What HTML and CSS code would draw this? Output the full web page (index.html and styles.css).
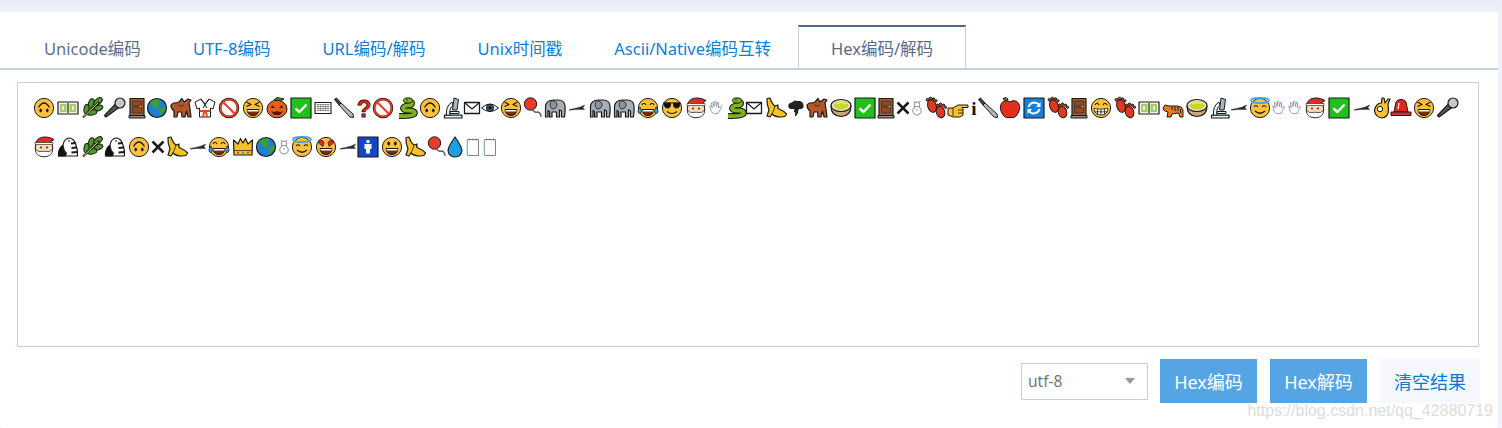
FILE: index.html
```html
<!DOCTYPE html>
<html lang="zh-CN">
<head>
    <meta charset="UTF-8">
    <title>Hex编码/解码</title>
    <link rel="stylesheet" href="styles.css">
</head>
<body>
    <svg class="defs" width="0" height="0">
        <defs>
            <circle id="ball" cy="12" r="9.6" fill="#fdc13c"/>
            <g id="mouth"><path d="M-6 13.5H6Q5.5 19.5 0 19.5T-6 13.5Z" fill="#7c2a12"/><path d="M-5.500 14H5.500V15.500H-5.500Z" fill="#fff" stroke="none"/></g>
            <g id="face"><use href="#ball"/><path d="M-5.500 11.500Q0 2.500 5.500 11.500" stroke-width="1.300"/><ellipse cx="-3.300" cy="14.500" rx=".9" ry="1.400" fill="#222"/><ellipse cx="3.300" cy="14.500" rx=".9" ry="1.400" fill="#222"/></g>
            <g id="laugh"><use href="#ball"/><path d="M-6.500 6L-2 8.500L-6.500 10.500M6.500 6L2 8.500L6.500 10.500" stroke-width="1.300"/><use href="#mouth"/></g>
            <g id="smile"><use href="#ball"/><ellipse cx="-3.300" cy="8.500" rx="1" ry="1.600" fill="#222"/><ellipse cx="3.300" cy="8.500" rx="1" ry="1.600" fill="#222"/><use href="#mouth"/></g>
            <g id="grin"><use href="#ball"/><path d="M-6 9Q-4 5.500 -2 9M2 9Q4 5.500 6 9" stroke-width="1.200"/><path d="M-7 12.500Q0 14 7 12.500Q6.500 19 0 19T-7 12.500ZM-3.500 13V18.500M0 13.500V19M3.500 13V18.500M-6.500 15.800H6.500" fill="#fff" stroke-width=".8"/></g>
            <g id="joy"><use href="#ball"/><path d="M-6 9Q-4 5.500 -2 9M2 9Q4 5.500 6 9" stroke-width="1.200"/><use href="#mouth"/><path d="M-8 11Q-11.500 15 -9.500 17T-6.500 15ZM8 11Q11.500 15 9.500 17T6.500 15Z" fill="#39a5e8" stroke-width=".7"/></g>
            <g id="sun"><use href="#ball"/><path d="M-9 7H9M-8 7H-1.500Q-1 12 -4.500 12T-8 7ZM1.500 7H8Q8 12 4.500 12T1.500 7Z" fill="#111"/><path d="M-5 15.500Q0 19.500 5 15.500" stroke-width="1.200"/></g>
            <g id="halo"><use href="#ball"/><ellipse cy="4.500" rx="9" ry="2.600" fill="none" stroke="#39a5e8" stroke-width="1.600"/><path d="M-6 11Q-4 8.500 -2 11M2 11Q4 8.500 6 11M-5 15Q0 19.500 5 15" stroke-width="1.200"/></g>
            <g id="hearteyes"><use href="#ball"/><path d="M-3 11.500L-7.500 8Q-8 5 -5.500 5.500Q-3.500 4.500 -2 7.500ZM3 11.500L7.500 8Q8 5 5.500 5.500Q3.500 4.500 2 7.500Z" fill="#e8261c" stroke-width=".7"/><use href="#mouth"/></g>
            <g id="santa"><circle cy="13" r="8.800" fill="#fbd9b5"/><path d="M-8.500 14Q-9 21.500 0 21.700Q9 21.500 8.500 14Q6 17.500 3 16.500Q0 16 -3 16.500Q-6 17.500 -8.500 14Z" fill="#fff" stroke-width=".7"/><path d="M-8.500 8Q-6 1.500 2 2Q7 2.500 10 4.500L7 6.500L8.500 8.500H-8.500Z" fill="#e02c20"/><path d="M-9 7.500H9V9.500H-9Z" fill="#fff" stroke-width=".6"/><circle cx="-3" cy="12.500" r=".9" fill="#222" stroke="none"/><circle cx="3" cy="12.500" r=".9" fill="#222" stroke="none"/></g>
            <g id="money"><rect x="-10" y="6" width="20" height="12" fill="#f4f4df" stroke-width="1.200"/><rect x="-8" y="8" width="6.500" height="8" fill="#a9c779" stroke="none"/><rect x="1.500" y="8" width="6.500" height="8" fill="#a9c779" stroke="none"/><rect x="-1" y="7" width="2" height="10" fill="#5f8b3a" stroke="none"/><path d="M-5 10V14M5 10V14" stroke="#fff" stroke-width="1.500"/></g>
            <g id="leaf"><g fill="#4d9a2a"><ellipse cx="6" cy="5.500" rx="5" ry="2.800" transform="rotate(-40 6 5.500)"/><ellipse cx="-1" cy="7.500" rx="5" ry="2.600" transform="rotate(-70 -1 7.500)"/><ellipse cx="6.500" cy="12" rx="4.500" ry="2.600" transform="rotate(-20 6.500 12)"/><ellipse cx="-5.500" cy="13" rx="4.500" ry="2.500" transform="rotate(-80 -5.500 13)"/><ellipse cx="0" cy="16.500" rx="5" ry="2.500" transform="rotate(-10 0 16.500)"/></g><path d="M-9 21.500L7 6" stroke="#1b1b1b" stroke-width="2"/><path d="M-8.500 21L6 7" stroke="#dde65a" stroke-width="1"/></g>
            <g id="mic"><path d="M-9 21L-10.500 19.500L.5 8L4 11.500Z" fill="#5a5a5a" stroke-width="1.200"/><circle cx="5" cy="7" r="5" fill="#c4c7cc" stroke-width="1.200"/></g>
            <g id="door"><rect x="-7" y="2.500" width="14" height="17" fill="#a05d33" stroke-width="1.200"/><rect x="-4.500" y="5" width="9" height="5" fill="#8a4b25" stroke-width=".5"/><rect x="-4.500" y="11" width="9" height="6" fill="#8a4b25" stroke-width=".5"/><circle cx="3.500" cy="10.500" r=".8" fill="#f4d05b" stroke="none"/><rect x="-8" y="19.500" width="16" height="2.500" fill="#8d8d8d"/></g>
            <g id="earth"><circle cy="12" r="9.500" fill="#1f7fd2" stroke-width="1.200"/><path d="M-7 6Q-2 2 3 4L1 7L3 10L-1 13L-4 10ZM2 14L7 10L9 13L4 19Z" fill="#3aa02f" stroke="none"/></g>
            <g id="ox"><path d="M-10 9Q-8 6 -5 7L-2 6L1 2.500L3 6L7 3L10 4L8 7L9 13L10 21H7L5.500 15L4 21H1L.5 16H-3L-4 21H-7L-7 15Q-10 13 -10 9Z" fill="#b5562a" stroke-width="1.200"/><path d="M-3 9Q0 11 3 9" stroke-width=".7"/></g>
            <g id="gi"><path d="M-4 3L-10 6L-8 13L-5.500 12V21H5.500V12L8 13L10 6L4 3L0 8Z" fill="#fff"/><path d="M-5.500 14H5.500V16H-5.500ZM-2 16L-3 21H-1L0 16L1 21H3L2 16Z" fill="#e0442c" stroke="none"/><path d="M-4 3L2 12M4 3L-2 12"/></g>
            <g id="no"><circle cy="12" r="9" fill="#fff" stroke="#1b1b1b" stroke-width="2.500"/><circle cy="12" r="8.500" fill="none" stroke="#e23e28" stroke-width="2"/><path d="M-6 6L6 18" stroke="#e23e28" stroke-width="2"/></g>
            <g id="pumpkin"><path d="M-3 4L0 1.500L7 3L3 5Z" fill="#3a9a2e"/><ellipse cy="13" rx="10" ry="8.800" fill="#e8601c"/><path d="M-5 9L-2 12H-6ZM5 9L2 12H6ZM-6 15L-3 16L0 15L3 16L6 15L3 19H-3Z" fill="#4b1905" stroke="none"/></g>
            <g id="check"><rect x="-10" y="2" width="20" height="20" fill="#1fc21a" stroke-width="1.200"/><path d="M-5.500 12.500L-1.500 16L5.500 8.500" stroke="#fff" stroke-width="2.400"/></g>
            <g id="keyboard"><rect x="-8" y="6.500" width="16" height="11" fill="#fff" stroke-width="1.100"/><path d="M-6.500 8.500H6.500M-6.500 10.500H6.500M-6.500 12.500H6.500M-6.500 14.500H6.500M-5 8V15M-2.500 8V15M0 8V15M2.500 8V15M5 8V15" stroke="#777" stroke-width=".7"/></g>
            <g id="knife"><path d="M-9.500 3.500L-7.500 2L-3 7L-5 9Z" fill="#5e3a22"/><path d="M-5 9L-3 7L9 18L9.500 21.500L6 21Z" fill="#b8b8b8"/></g>
            <text id="question" y="21" text-anchor="middle" class="glyph-q">?</text>
            <text id="info" y="19" text-anchor="middle" class="glyph-i">i</text>
            <g id="snake"><path d="M1 5Q7 6 4 9Q-4 9.500 -4 12.500Q-3 15 3 14.500Q9 15 7.500 18Q5 20.500 -8 20" stroke-width="6"/><path d="M1 5Q7 6 4 9Q-4 9.500 -4 12.500Q-3 15 3 14.500Q9 15 7.500 18Q5 20.500 -8 20" stroke="#7fb321" stroke-width="3.800"/><ellipse cx="1" cy="4.500" rx="4.500" ry="2.600" fill="#7fb321"/><circle cx="0" cy="4" r=".7" fill="#111" stroke="none"/></g>
            <g id="micro"><path d="M-8.500 22V19.200H9V22Z" fill="#dff3fb" stroke-width="1.200"/><path d="M-6.500 19.200Q-7.500 10 -1 6L0 9.500Q-4 12 -3 19.200Z" fill="#dff3fb"/><path d="M1 2L5.500 3.500L4 14H-.5Z" fill="#aab6bf"/><path d="M-3 15.500H6V17.500H-3Z" fill="#dff3fb"/></g>
            <g id="mail"><rect x="-7.500" y="6.500" width="15" height="11" fill="#fff" stroke-width="1.300"/><path d="M-7 7L0 13L7 7" stroke-width="1.100"/></g>
            <g id="eye"><path d="M-8.500 12Q0 4 8.500 12Q0 19 -8.500 12Z" fill="#fff"/><circle cy="11.800" r="3.600" fill="#38586f"/><circle cy="11.800" r="1.500" fill="#111" stroke="none"/></g>
            <g id="balloon"><circle cx="-2.500" cy="8" r="6.200" fill="#e83a28"/><path d="M-.5 13.500Q1 17 5 16Q8 17 8 21" stroke-width="1.400" stroke="#5a6670"/></g>
            <g id="elephant"><path d="M-9.500 21V11Q-9.500 4 -1 4H3Q9.500 4 10 10Q10.500 15 9.500 21H6.500V15L4.500 14V21H1.500V16H-3V21H-5.500V15.500L-7 14.500V21Z" fill="#a5adb5" stroke-width="1.200"/><path d="M-3 4.500Q-7 8 -3 13Q2 13 2 8Q1 5 -3 4.500Z" fill="#8d959e" stroke-width=".8"/></g>
            <g id="plane" transform="scale(.85 1)"><path d="M-9 13.500Q-3 12.500 3 11.300L9 9L7 11.800L9 13.500H-1L-9 14.200Z" fill="#2b2b2b" stroke-width=".4"/></g>
            <g id="hand" transform="translate(0 3) scale(.75)"><path d="M-3 20Q-7 18 -8 11Q-9 9 -7 9L-5 12L-6 5Q-5 3.500 -4 5L-2.500 10L-2 3.500Q-1 2.500 0 3.500L.5 10L2 4.500Q3.500 4 3.500 5.500L3 12L6 9.500Q8 10 7 11.500L3 19Z" fill="#fff" stroke="#7f8a99" stroke-width="1.100"/></g>
            <g id="banana"><path d="M-9 2.500L-6 2Q-4 8 -1 10L2 9Q1 12 3 13Q8 15 10.500 18Q10 21 5 21Q-1 21 -4 18L-6 21L-9 20L-7 14Q-9.500 8 -9 2.500Z" fill="#f8c31f" stroke-width="1.200"/><path d="M-1 10Q-2 14 -4 18" stroke-width=".8"/></g>
            <g id="cloud"><path d="M-7 11Q-8 7 -4 7Q-2 4 2 5.500Q7 5 7 9.500Q8 12 5 12.500H-5Q-7 12.500 -7 11ZM-1 12.500H3L1 16L2 16L-.5 20L0 16H-1.500Z" fill="#222"/></g>
            <g id="bowl"><path d="M-10 10Q-10 20 0 20.500Q10 20 10 10Z" fill="#c9a77b" stroke-width="1.200"/><ellipse cy="9.500" rx="10" ry="6" fill="#e9e2c4" stroke-width="1.200"/><ellipse cy="9.500" rx="7.500" ry="4" fill="#c8d62a" stroke="none"/><path d="M-5 8Q0 5 5 8" stroke="#eef39a"/></g>
            <g id="cross"><path d="M-5.500 6.500L5.500 17.500M5.500 6.500L-5.500 17.500" stroke-width="2.500"/></g>
            <g id="snowman" transform="translate(0 2) scale(.85)"><circle cy="8" r="3.300" fill="#fff" stroke="#667" stroke-width=".9"/><circle cy="15" r="5" fill="#fff" stroke="#667" stroke-width=".9"/><path d="M-4 4L-2 5M4 4L2 5" stroke="#c33" stroke-width=".8"/><circle cy="14" r=".7" fill="#333" stroke="none"/></g>
            <g id="feet" fill="#e2381f"><ellipse cx="-4" cy="10" rx="4.200" ry="6.500" transform="rotate(-18 -4 10)"/><circle cx="-8.500" cy="3.800" r="1.400"/><circle cx="-5.500" cy="2.500" r="1.300"/><circle cx="-2.500" cy="3" r="1.200"/><circle cx="0" cy="4.800" r="1.100"/><ellipse cx="4.500" cy="16" rx="4.200" ry="5.800" transform="rotate(-18 4.500 16)"/><circle cx="1.500" cy="9.300" r="1.300"/><circle cx="4.500" cy="8.300" r="1.300"/><circle cx="7.500" cy="9.300" r="1.200"/><circle cx="9.500" cy="11.300" r="1.100"/></g>
            <g id="point"><path d="M-10 12H-5L0 9H10V11.500H4L5 13V19L2 21H-5L-10 19Z" fill="#fbc12e"/><path d="M-5 12V20M0 14H5M0 17H5" stroke-width=".8"/></g>
            <g id="apple"><path d="M-2 3L-5 1.500L-7 3L-3 5.500Z" fill="#3a9a2e"/><path d="M0 6Q-3 3.500 -7 5.500Q-11 9 -9 15Q-6 23 -1 21.500H1Q6 23 9 15Q11 9 7 5.500Q3 3.500 0 6Z" fill="#e2301e"/></g>
            <g id="recycle"><rect x="-10" y="2" width="20" height="20" fill="#1581dc" stroke-width="1.200"/><path d="M-5.500 11Q-4 6.500 1 6.500Q4 7 5.500 9.500M5.500 13Q4 17.500 -1 17.500Q-4 17 -5.500 14.500" stroke="#fff" stroke-width="2"/><path d="M6.500 6V11H2ZM-6.500 18V13H-2Z" fill="#fff" stroke="none"/></g>
            <g id="tiger"><path d="M-10 12L-8 9L-4 10L4 10Q9 10 10 14L10 21H7L5.500 17L-1 18L-2 21H-6L-5 16L-9 14.500Z" fill="#ec7a1c"/><path d="M-1 10.500V14M2 10.500V15M5 11V15M7.500 13V17" stroke-width="1"/></g>
            <g id="ok"><path d="M-4 8Q-7.500 11 -7.500 15Q-6.500 21 0 22Q6.500 21 6.500 14L6 8L8 3H6L3 7L2 2H0L-.5 7Q-2 7 -4 8Z" fill="#fbc12e" stroke-width="1.200"/><circle cx="-2" cy="13" r="2.700" fill="#fff"/></g>
            <g id="siren"><path d="M-7 16L-5 6Q-4 3.500 0 3.500T5 6L7 16Z" fill="#e8261c"/><rect x="-10" y="16" width="20" height="3.500" fill="#c2343a"/><path d="M-3 13L-2 7" stroke="#fff" stroke-width="1.200"/></g>
            <g id="zebra"><path d="M-9.500 21Q-10 14 -5 10Q-4 4 1 3Q6 3 8 10Q10 15 9.500 21H-8Z" fill="#fff" stroke-width="1.200"/><path d="M-9.500 21Q-10 14 -5 10Q-4.500 16 -1.500 18L-2.500 21Z" fill="#111"/><path d="M3 8.500L7.500 8M3.500 13L9 12.500M3.500 17.500L9.500 17" stroke-width="1.800"/><circle cx="1" cy="6" r="1" fill="#e2381f" stroke="none"/></g>
            <g id="crown"><path d="M-9.500 5L-5 9L-2.500 3.500L0 8L2.500 3.500L5 9L9.500 5L9 20H-9Z" fill="#f6c22c" stroke-width="1.200"/><path d="M-9 15.500H9" stroke-width=".7"/><circle cx="-5" cy="17.700" r="1.100" fill="#e2381f" stroke="none"/><circle cy="17.700" r="1.100" fill="#3a7ee8" stroke="none"/><circle cx="5" cy="17.700" r="1.100" fill="#e2381f" stroke="none"/></g>
            <g id="man"><rect x="-10" y="2" width="20" height="20" fill="#1148c9" stroke-width="1.200"/><circle cy="6.500" r="1.700" fill="#fff" stroke="none"/><path d="M-3.500 9H3.500V14H2V18.500H-2V14H-3.500Z" fill="#fff" stroke="none"/></g>
            <g id="drop"><path d="M0 2Q-7 12 -7 15.500Q-6 22 0 22T7 15.500Q7 12 0 2Z" fill="#1f9ee0" stroke-width="1.200"/></g>
            <g id="note"><path d="M-5.500 4.500H5.500V20.500H-5.500Z" fill="#fff" stroke="#777" stroke-width=".9"/><path d="M-6 5V20.500" stroke="#8fe0ee" stroke-width="1"/><path d="M-3.500 3.500V5.500M0 3.500V5.500M3.500 3.500V5.500" stroke="#555" stroke-width=".7"/></g>
        </defs>
    </svg>

    <div class="page">
        <div class="card">
            <div class="tabs">
                <a class="tab tab-grey">Unicode编码</a>
                <a class="tab">UTF-8编码</a>
                <a class="tab">URL编码/解码</a>
                <a class="tab">Unix时间戳</a>
                <a class="tab">Ascii/Native编码互转</a>
                <a class="tab tab-active">Hex编码/解码</a>
            </div>

            <div class="result-box">
                <div class="emoji-row">
                    <svg class="e w24"><use href="#face"/></svg><svg class="e w24"><use href="#money"/></svg><svg class="e w23"><use href="#leaf"/></svg><svg class="e w22"><use href="#mic"/></svg><svg class="e w20"><use href="#door"/></svg><svg class="e w24"><use href="#earth"/></svg><svg class="e w24"><use href="#ox"/></svg><svg class="e w24"><use href="#gi"/></svg><svg class="e w24"><use href="#no"/></svg><svg class="e w24"><use href="#laugh"/></svg><svg class="e w24"><use href="#pumpkin"/></svg><svg class="e w22"><use href="#check"/></svg><svg class="e w21"><use href="#keyboard"/></svg><svg class="e w20"><use href="#knife"/></svg><svg class="e w19"><use href="#question"/></svg><svg class="e w24"><use href="#no"/></svg><svg class="e w23"><use href="#snake"/></svg><svg class="e w23"><use href="#face"/></svg><svg class="e w19"><use href="#micro"/></svg><svg class="e w18"><use href="#mail"/></svg><svg class="e w21"><use href="#eye"/></svg><svg class="e w22"><use href="#laugh"/></svg><svg class="e w22"><use href="#balloon"/></svg><svg class="e w22"><use href="#elephant"/></svg><svg class="e w23"><use href="#plane"/></svg><svg class="e w24"><use href="#elephant"/></svg><svg class="e w24"><use href="#elephant"/></svg><svg class="e w24"><use href="#joy"/></svg><svg class="e w24"><use href="#sun"/></svg><svg class="e w20"><use href="#santa"/></svg><svg class="e w20"><use href="#hand"/></svg><svg class="e w18"><use href="#snake"/></svg><svg class="e w22"><use href="#mail"/></svg><svg class="e w20"><use href="#banana"/></svg><svg class="e w21"><use href="#cloud"/></svg><svg class="e w24"><use href="#ox"/></svg><svg class="e w24"><use href="#bowl"/></svg><svg class="e w21"><use href="#check"/></svg><svg class="e w17"><use href="#door"/></svg><svg class="e w14"><use href="#cross"/></svg><svg class="e w19"><use href="#snowman"/></svg><svg class="e w22"><use href="#feet"/></svg><svg class="e w16"><use href="#point"/></svg><svg class="e w14"><use href="#info"/></svg><svg class="e w22"><use href="#knife"/></svg><svg class="e w24"><use href="#apple"/></svg><svg class="e w24"><use href="#recycle"/></svg><svg class="e w21"><use href="#feet"/></svg><svg class="e w22"><use href="#door"/></svg><svg class="e w24"><use href="#grin"/></svg><svg class="e w24"><use href="#feet"/></svg><svg class="e w24"><use href="#money"/></svg><svg class="e w24"><use href="#tiger"/></svg><svg class="e w23"><use href="#bowl"/></svg><svg class="e w19"><use href="#micro"/></svg><svg class="e w21"><use href="#plane"/></svg><svg class="e w19"><use href="#halo"/></svg><svg class="e w16"><use href="#hand"/></svg><svg class="e w20"><use href="#hand"/></svg><svg class="e w24"><use href="#santa"/></svg><svg class="e w23"><use href="#check"/></svg><svg class="e w20"><use href="#plane"/></svg><svg class="e w19"><use href="#ok"/></svg><svg class="e w23"><use href="#siren"/></svg><svg class="e w24"><use href="#laugh"/></svg><svg class="e w24"><use href="#mic"/></svg>
                </div>
                <div class="emoji-row">
                    <svg class="e w24"><use href="#santa"/></svg><svg class="e w24"><use href="#zebra"/></svg><svg class="e w23"><use href="#leaf"/></svg><svg class="e w24"><use href="#zebra"/></svg><svg class="e w19"><use href="#face"/></svg><svg class="e w19"><use href="#cross"/></svg><svg class="e w21"><use href="#banana"/></svg><svg class="e w21"><use href="#plane"/></svg><svg class="e w24"><use href="#joy"/></svg><svg class="e w23"><use href="#crown"/></svg><svg class="e w18"><use href="#earth"/></svg><svg class="e w18"><use href="#snowman"/></svg><svg class="e w24"><use href="#halo"/></svg><svg class="e w22"><use href="#hearteyes"/></svg><svg class="e w20"><use href="#plane"/></svg><svg class="e w24"><use href="#man"/></svg><svg class="e w23"><use href="#smile"/></svg><svg class="e w22"><use href="#banana"/></svg><svg class="e w18"><use href="#balloon"/></svg><svg class="e w18"><use href="#drop"/></svg><svg class="e w17"><use href="#note"/></svg><svg class="e w17"><use href="#note"/></svg>
                </div>
            </div>

            <div class="toolbar">
                <div class="charset-select">
                    <span class="charset-value">utf-8</span>
                    <span class="charset-arrow"></span>
                </div>
                <button class="btn btn-primary">Hex编码</button>
                <button class="btn btn-primary">Hex解码</button>
                <button class="btn btn-plain">清空结果</button>
            </div>
        </div>
        <div class="watermark">https://blog.csdn.net/qq_42880719</div>
    </div>
</body>
</html>
```

FILE: styles.css
```css
html, body {
    margin: 0;
    height: 428px;
    overflow: hidden;
}

body {
    font-family: "Noto Sans", "Noto Sans CJK SC", sans-serif;
    background: linear-gradient(#e5ecf6, #eef3fa 12px);
}

.defs {
    position: absolute;
}

.page {
    position: relative;
    padding: 12px 4px 0 0;
}

.card {
    background: #fff;
    border-radius: 3px;
    height: 416px;
    box-sizing: border-box;
    padding-top: 13px;
}

.tabs {
    display: flex;
    height: 43px;
    padding-left: 18px;
    border-bottom: 2px solid #c5cfe0;
}

.tab {
    padding: 0 26px;
    font-size: 16.5px;
    line-height: 47px;
    color: #0f7fd4;
    white-space: nowrap;
}

.tab-grey {
    color: #5b7088;
}

.tab-active {
    height: 43px;
    box-sizing: border-box;
    margin-left: 1px;
    padding: 0 32px;
    line-height: 44px;
    color: #5a6a88;
    background: #fff;
    border: 1px solid #c5cfe0;
    border-top: 2px solid #566785;
    border-bottom: none;
}

.result-box {
    margin: 12px 19px 0 17px;
    height: 265px;
    box-sizing: border-box;
    padding: 13px 0 0 26px;
    border: 1px solid #c5cfe0;
}

.emoji-row {
    display: flex;
    height: 24px;
    margin-bottom: 15px;
}

.e {
    flex: none;
    height: 24px;
    overflow: visible;
    fill: none;
    stroke: #1b1b1b;
    stroke-width: 1;
    stroke-linejoin: round;
}

.w14 { width: 14px; }
.w16 { width: 16px; }
.w17 { width: 17px; }
.w18 { width: 18px; }
.w19 { width: 19px; }
.w20 { width: 20px; }
.w21 { width: 21px; }
.w22 { width: 22px; }
.w23 { width: 23px; }
.w24 { width: 24px; }

.glyph-q {
    font: bold 24px "Liberation Sans", sans-serif;
    fill: #d8301c;
    stroke: #4a120a;
    stroke-width: .8;
}

.glyph-i {
    font: bold 19px "Liberation Serif", serif;
    fill: #111;
    stroke: none;
}

.toolbar {
    display: flex;
    justify-content: flex-end;
    align-items: center;
    gap: 13px;
    margin: 12px 18px 0 0;
}

.charset-select {
    width: 127px;
    height: 37px;
    box-sizing: border-box;
    display: flex;
    align-items: center;
    justify-content: space-between;
    margin-right: -1px;
    padding: 0 12px 0 6px;
    border: 1px solid #c8ced8;
    font-size: 15.5px;
    color: #777;
}

.charset-arrow {
    width: 0;
    height: 0;
    border-left: 5px solid transparent;
    border-right: 5px solid transparent;
    border-top: 6px solid #999;
}

.btn {
    width: 97px;
    height: 44px;
    border: none;
    padding: 0;
    font-family: inherit;
    font-size: 18px;
}

.btn-primary {
    background: #55a5e4;
    color: #fff;
}

.btn-plain {
    width: 100px;
    background: #f5f9fd;
    color: #0b7ad1;
}

.watermark {
    position: absolute;
    right: 9px;
    bottom: 8px;
    font: 16px "Liberation Sans", sans-serif;
    color: #dcdcdc;
}
```
